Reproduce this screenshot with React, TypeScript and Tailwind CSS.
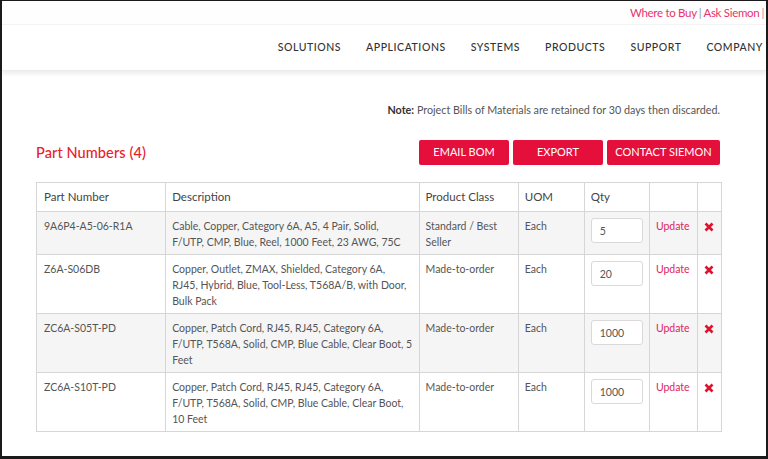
import React from "react";

const navItems = ["SOLUTIONS", "APPLICATIONS", "SYSTEMS", "PRODUCTS", "SUPPORT", "COMPANY"];

const parts = [
  {
    part: "9A6P4-A5-06-R1A",
    desc: "Cable, Copper, Category 6A, A5, 4 Pair, Solid, F/UTP, CMP, Blue, Reel, 1000 Feet, 23 AWG, 75C",
    cls: "Standard / Best Seller",
    qty: "5",
  },
  {
    part: "Z6A-S06DB",
    desc: "Copper, Outlet, ZMAX, Shielded, Category 6A, RJ45, Hybrid, Blue, Tool-Less, T568A/B, with Door, Bulk Pack",
    cls: "Made-to-order",
    qty: "20",
  },
  {
    part: "ZC6A-S05T-PD",
    desc: "Copper, Patch Cord, RJ45, RJ45, Category 6A, F/UTP, T568A, Solid, CMP, Blue Cable, Clear Boot, 5 Feet",
    cls: "Made-to-order",
    qty: "1000",
  },
  {
    part: "ZC6A-S10T-PD",
    desc: "Copper, Patch Cord, RJ45, RJ45, Category 6A, F/UTP, T568A, Solid, CMP, Blue Cable, Clear Boot, 10 Feet",
    cls: "Made-to-order",
    qty: "1000",
  },
];

const CloseIcon = () => (
  <svg width="10" height="10" viewBox="0 0 10 10">
    <path d="M1.5 1.5 L8.5 8.5 M8.5 1.5 L1.5 8.5" stroke="#e0102f" strokeWidth="2.6" strokeLinecap="butt" />
  </svg>
);

const App: React.FC = () => {
  return (
    <div
      className="w-[768px] h-[459px] overflow-hidden bg-white border-t border-l-2 border-r-2 border-b-[3px] border-[#1a1a1a] text-[#555]"
      style={{ fontFamily: "Lato, 'Open Sans', sans-serif" }}
    >
      {/* utility links */}
      <div className="h-[24px] flex justify-end items-center pr-[2px] text-[11.5px] text-[#e8336b] tracking-[-0.3px] border-b border-[#f3f3f3] bg-[#fefefe]">
        <span>Where to Buy</span>
        <span className="text-[#999] mx-[2px]">|</span>
        <span>Ask Siemon</span>
        <span className="text-[#999] ml-[2px]">|</span>
      </div>

      {/* main nav */}
      <div className="h-[46px] flex justify-end items-center gap-[25px] pr-[3px] shadow-[0_3px_4px_rgba(0,0,0,0.07)] border-b border-[#ececec]">
        {navItems.map((n) => (
          <span key={n} className="text-[10.5px] tracking-[0.55px] text-[#333] font-medium">
            {n}
          </span>
        ))}
      </div>

      <div className="pl-[34px] pr-[46px]">
        <div className="mt-[31px] text-right text-[10.75px] text-[#555]">
          <span className="font-bold text-[#333]">Note:</span> Project Bills of Materials are retained for 30 days then discarded.
        </div>

        <div className="mt-[22px] flex items-center justify-between">
          <h2 className="text-[14.5px] text-[#e8202a] font-medium tracking-[0.1px]">Part Numbers (4)</h2>
          <div className="flex gap-[4px]">
            <button className="w-[90px] h-[25px] bg-[#e50f3c] text-white text-[11px] rounded-[2px]">EMAIL BOM</button>
            <button className="w-[90px] h-[25px] bg-[#e50f3c] text-white text-[11px] rounded-[2px]">EXPORT</button>
            <button className="w-[113px] h-[25px] bg-[#e50f3c] text-white text-[11px] rounded-[2px]">CONTACT SIEMON</button>
          </div>
        </div>

        <table className="mt-[17px] w-[686px] table-fixed border-collapse text-[10.5px] leading-[16px]">
          <colgroup>
            <col className="w-[129px]" />
            <col className="w-[253px]" />
            <col className="w-[99px]" />
            <col className="w-[66px]" />
            <col className="w-[65px]" />
            <col className="w-[48px]" />
            <col className="w-[24px]" />
          </colgroup>
          <thead>
            <tr className="h-[29px] text-[#444] text-[11.5px]">
              <th className="border border-[#d6d6d6] text-left font-normal px-[7px]">Part Number</th>
              <th className="border border-[#d6d6d6] text-left font-normal px-[6px]">Description</th>
              <th className="border border-[#d6d6d6] text-left font-normal px-[6px]">Product Class</th>
              <th className="border border-[#d6d6d6] text-left font-normal px-[6px]">UOM</th>
              <th className="border border-[#d6d6d6] text-left font-normal px-[6px]">Qty</th>
              <th className="border border-[#d6d6d6]"></th>
              <th className="border border-[#d6d6d6]"></th>
            </tr>
          </thead>
          <tbody>
            {parts.map((p, i) => (
              <tr key={p.part} className={i % 2 === 0 ? "bg-[#f5f5f5] align-top" : "bg-white align-top"}>
                <td className="border border-[#d6d6d6] px-[7px] pt-[6px]">{p.part}</td>
                <td className="border border-[#d6d6d6] px-[6px] pt-[6px] pb-[4px]">{p.desc}</td>
                <td className="border border-[#d6d6d6] px-[6px] pt-[6px]">{p.cls}</td>
                <td className="border border-[#d6d6d6] px-[6px] pt-[6px]">Each</td>
                <td className="border border-[#d6d6d6] px-[6px] pt-[6px]">
                  <div className="w-[52px] h-[25px] bg-white border border-[#d9d9d9] rounded-[3px] flex items-center px-[8px] text-[#555]">
                    {p.qty}
                  </div>
                </td>
                <td className="border border-[#d6d6d6] px-[6px] pt-[6px] text-[#e0245e]">Update</td>
                <td className="border border-[#d6d6d6] pt-[8px] text-center">
                  <span className="inline-flex">
                    <CloseIcon />
                  </span>
                </td>
              </tr>
            ))}
          </tbody>
        </table>
      </div>
    </div>
  );
};

export default App;
